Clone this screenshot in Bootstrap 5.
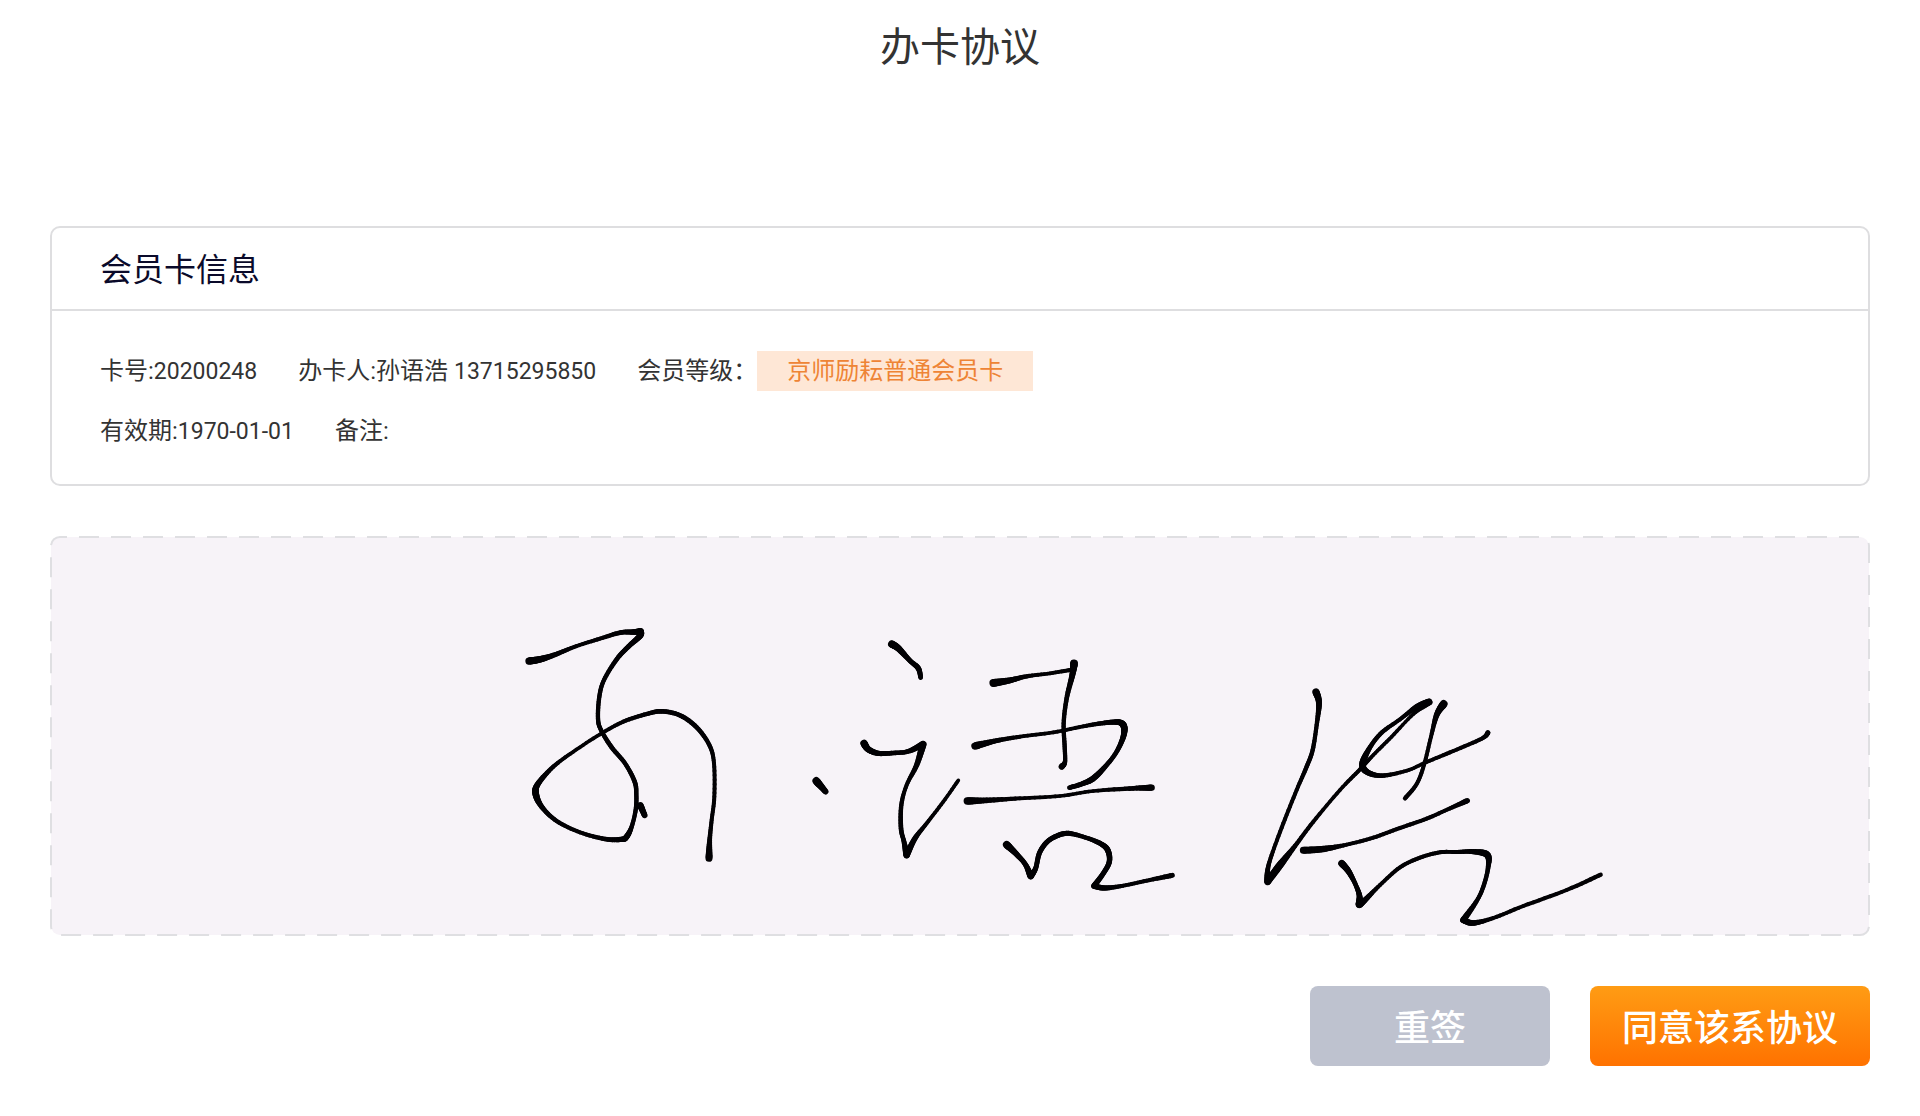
<!DOCTYPE html>
<html lang="zh-CN">
<head>
<meta charset="utf-8">
<meta name="viewport" content="width=device-width, initial-scale=1">
<title>办卡协议</title>
<link href="https://cdn.jsdelivr.net/npm/bootstrap@5.3.0/dist/css/bootstrap.min.css" rel="stylesheet">
<style>
  body { font-family: Roboto, "Noto Sans CJK SC", sans-serif; color: #333; background: #fff; }
  .agreement-page { padding: 18px 50px 50px; }
  .page-title { font-size: 40px; line-height: 60px; margin-bottom: 148px; }
  .member-card { border: 2px solid #dedee0; border-radius: 10px; margin-bottom: 50px; }
  .member-card .card-header { background: none; border-bottom: 2px solid #dedee0; padding: 17px 48px 14px; }
  .member-title { font-size: 32px; line-height: 50px; color: #0a0a2a; }
  .member-card .card-body { padding: 30px 48px 23px; font-size: 24px; line-height: 60px; }
  .info-row { column-gap: 41px; }
  .info-number { font-size: 23px; line-height: 1; }
  .level-tag { background: #fee7d6; color: #ee8435; line-height: 40px; padding: 0 30px; }
  .sign-pad { height: 400px; margin-bottom: 50px; }
  .sign-pad .pad-frame { x: 1px; y: 1px; width: calc(100% - 2px); height: calc(100% - 2px); fill: #f7f3f8; stroke: #dfdfe2; stroke-width: 2; stroke-dasharray: 20 12; stroke-dashoffset: 13; }
  .sign-pad .ink { stroke: #020104; stroke-linecap: round; }
  .pad-btn { height: 80px; border: 0; border-radius: 8px; font-size: 36px; font-weight: 500; color: #fff; padding: 6px 0 0; }
  .pad-btn:hover { color: #fff; }
  .btn-resign, .btn-resign:hover { width: 240px; background: #bec2cf; }
  .btn-agree, .btn-agree:hover { width: 280px; background: linear-gradient(#ff9c14, #ff7200); }
</style>
</head>
<body>
<main class="agreement-page">
  <h1 class="page-title text-center fw-normal">办卡协议</h1>

  <section class="card member-card">
    <div class="card-header">
      <h2 class="member-title fw-normal mb-0">会员卡信息</h2>
    </div>
    <div class="card-body">
      <div class="info-row d-flex flex-wrap">
        <span>卡号:<span class="info-number">20200248</span></span>
        <span>办卡人:孙语浩 <span class="info-number">13715295850</span></span>
        <span class="d-flex align-items-center">会员等级：<span class="level-tag">京师励耘普通会员卡</span></span>
      </div>
      <div class="info-row d-flex flex-wrap">
        <span>有效期:<span class="info-number">1970-01-01</span></span>
        <span>备注:</span>
      </div>
    </div>
  </section>

  <section class="sign-pad" aria-label="签名">
    <svg class="d-block w-100 h-100">
      <rect class="pad-frame" rx="9"/>
      <svg viewBox="50 536 1820 400" width="100%" height="100%">
        <g class="ink" id="ink"></g>
      </svg>
    </svg>
  </section>

  <div class="d-flex justify-content-end flex-wrap gap-4">
    <button type="button" class="btn pad-btn btn-resign me-3">重签</button>
    <button type="button" class="btn pad-btn btn-agree">同意该系协议</button>
  </div>
</main>
<script src="https://cdn.jsdelivr.net/npm/bootstrap@5.3.0/dist/js/bootstrap.bundle.min.js"></script>
<script>
  // Each stroke is a flat list of x, y, pen width, in thirds of a pixel from the character's origin.
  const characters = [
    { x: 500, y: 610, strokes: [
      [87,153,22, 120,148,20, 165,134,15, 230,108,12, 300,86,12, 360,68,14, 400,66,16, 422,64,19],
      [422,64,19, 420,78,18, 385,110,15, 350,148,14, 312,210,13, 298,260,13, 294,325,13, 303,360,13, 335,412,14, 375,460,13, 404,515,14, 409,555,13, 407,600,13, 395,650,13, 380,680,17, 365,688,16, 315,687,14, 240,667,12, 170,633,13, 125,590,15, 107,550,20, 115,520,17, 160,470,13, 220,425,11, 300,373,11, 370,335,12, 440,312,13, 485,304,14, 540,316,14, 590,352,14, 628,405,13, 642,460,12, 643,560,12, 635,630,12, 629,690,14, 627,745,21],
      [421,586,20, 434,616,17],
      [949,513,24, 977,545,17]
    ]},
    { x: 840, y: 620, strokes: [
      [155,72,22, 175,85,20, 210,122,15, 235,145,16, 242,173,14],
      [72,370,22, 85,388,19, 115,400,16, 160,399,14, 205,394,14, 249,373,20],
      [249,373,22, 230,435,16, 200,495,12, 184,555,13, 183,625,14, 192,665,14, 200,705,20],
      [200,705,20, 225,655,16, 260,610,12, 310,545,11, 355,481,11],
      [460,189,24, 510,181,18, 560,169,13, 630,160,11, 690,150,12],
      [702,130,24, 697,165,18, 680,235,14, 671,310,13, 674,380,13, 675,425,13, 665,440,18],
      [405,378,23, 470,362,15, 540,350,12, 640,337,11, 740,317,12, 800,308,14, 838,307,17, 852,320,20, 850,350,17, 830,395,14, 800,435,14, 760,475,18, 725,492,15, 688,503,14],
      [382,543,23, 440,541,17, 540,535,12, 660,528,11, 760,513,11, 880,505,14, 935,503,19],
      [500,674,23, 530,703,17, 556,733,15, 572,768,20],
      [572,768,20, 587,745,15, 598,700,15, 620,667,15, 650,648,15, 685,640,15, 735,652,13, 780,670,15, 803,690,17, 808,725,16, 790,760,15, 762,798,17],
      [762,798,17, 795,804,16, 850,797,12, 920,782,12, 997,766,15]
    ]},
    { x: 1240, y: 670, strokes: [
      [228,66,22, 237,100,18, 230,165,13, 218,240,13, 200,290,13, 170,360,12, 130,460,12, 95,555,12, 83,600,14, 83,635,20],
      [83,635,20, 120,585,22, 165,528,14, 220,455,12, 300,360,11, 360,298,12, 400,255,11, 455,200,11, 520,132,11, 567,96,20],
      [567,96,21, 530,110,16, 480,148,12, 425,188,13, 390,232,14, 368,280,20, 380,305,18, 425,317,14, 500,302,11, 560,276,11, 640,243,12, 725,206,12, 744,188,15],
      [611,102,24, 590,135,17, 573,200,12, 552,285,12, 530,342,12, 495,385,13],
      [190,541,21, 250,537,19, 320,524,12, 400,503,12, 480,474,12, 560,446,12, 630,415,12, 682,392,16],
      [305,580,21, 325,603,18, 345,640,14, 358,675,16, 358,703,22],
      [358,703,22, 375,690,17, 420,645,12, 480,592,12, 540,563,12, 600,547,12, 650,546,12, 700,545,15, 742,555,20, 744,595,14, 730,650,13, 710,693,13, 670,750,19],
      [670,750,19, 700,759,17, 760,744,12, 850,708,12, 980,660,12, 1082,614,13]
    ]}
  ];
  const ink = document.getElementById('ink');
  const spline = (a, b, c, d, t) =>
    0.5 * (2 * b + (c - a) * t + (2 * a - 5 * b + 4 * c - d) * t * t + (3 * b - a - 3 * c + d) * t * t * t);

  for (const ch of characters) {
    for (const flat of ch.strokes) {
      const pts = [];
      for (let i = 0; i < flat.length; i += 3) {
        pts.push([ch.x + flat[i] / 3, ch.y + flat[i + 1] / 3, flat[i + 2] / 3]);
      }
      let prev = pts[0];
      for (let i = 0; i < pts.length - 1; i++) {
        const a = pts[Math.max(i - 1, 0)], b = pts[i], c = pts[i + 1], d = pts[Math.min(i + 2, pts.length - 1)];
        for (let s = 1; s <= 8; s++) {
          const next = [0, 1, 2].map(k => spline(a[k], b[k], c[k], d[k], s / 8));
          const line = document.createElementNS('http://www.w3.org/2000/svg', 'line');
          line.setAttribute('x1', prev[0]);
          line.setAttribute('y1', prev[1]);
          line.setAttribute('x2', next[0]);
          line.setAttribute('y2', next[1]);
          line.setAttribute('stroke-width', next[2]);
          ink.appendChild(line);
          prev = next;
        }
      }
    }
  }
</script>
</body>
</html>
